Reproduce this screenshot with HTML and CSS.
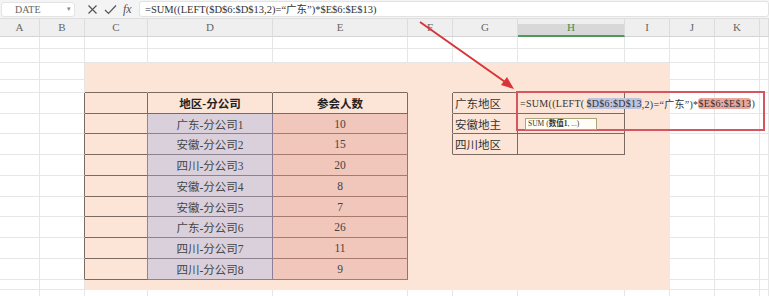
FILE: index.html
```html
<!DOCTYPE html>
<html lang="zh">
<head>
  <meta charset="UTF-8">
  <title>SUM</title>
  <link rel="stylesheet" href="styles.css">
</head>
<body>

<div class="app">
  <div class="fbar">
    <div class="namebox"><span>DATE</span><span class="drop">▾</span></div>
    <div class="tools">
      <svg width="11" height="11" viewBox="0 0 11 11"><path d="M1.5 1.5 L9.5 9.5 M9.5 1.5 L1.5 9.5" stroke="#555" stroke-width="1.2" fill="none"/></svg>
      <svg width="13" height="11" viewBox="0 0 13 11"><path d="M1 6 L4.5 9.5 L12 1.5" stroke="#555" stroke-width="1.2" fill="none"/></svg>
      <span class="fx">fx</span>
    </div>
    <div class="finput">=SUM((LEFT($D$6:$D$13,2)=“广东”)*$E$6:$E$13)</div>
  </div>

  <div class="sheet" id="sheet"></div>

  <div class="editbox"></div>
  <div class="tip">SUM (<b>数值1</b>, ...)</div>
  <svg class="arrow" width="769" height="296" viewBox="0 0 769 296">
    <line x1="420" y1="22" x2="508" y2="84" stroke="#d8343a" stroke-width="2"/>
    <polygon points="514,89 501,85 507,77" fill="#d8343a"/>
  </svg>
</div>

<script>
  // 列宽和行高 (像素)
  const cols = ['A', 'B', 'C', 'D', 'E', 'F', 'G', 'H', 'I', 'J', 'K', ''];
  const rowCount = 15;
  const sheet = document.getElementById('sheet');

  const names = ['广东-分公司1', '安徽-分公司2', '四川-分公司3', '安徽-分公司4',
                 '安徽-分公司5', '广东-分公司6', '四川-分公司7', '四川-分公司8'];
  const counts = [10, 15, 20, 8, 7, 26, 11, 9];
  const regions = ['广东地区', '安徽地主', '四川地区'];

  cols.forEach(function (c) {
    const d = document.createElement('div');
    d.className = 'hd' + (c === 'H' ? ' hd-on' : '');
    d.textContent = c;
    sheet.appendChild(d);
  });

  for (let r = 0; r < rowCount; r++) {
    for (let c = 0; c < cols.length; c++) {
      const cell = document.createElement('div');
      const cls = ['cell'];
      const inFill = r >= 2 && r <= 13 && c >= 2 && c <= 8;
      const inTable = r >= 4 && r <= 12 && c >= 2 && c <= 4;
      const inRight = r >= 4 && r <= 6 && (c === 6 || c === 7);
      if (inFill) cls.push('fill');
      if (inTable || inRight) cls.push('box');
      // 表格上边和左边的线
      if (r === 3 && ((c >= 2 && c <= 4) || c === 6 || c === 7)) cls.push('edge-b');
      if (c === 1 && r >= 4 && r <= 12) cls.push('edge-r');
      if (c === 5 && r >= 4 && r <= 6) cls.push('edge-r');

      if (r === 4 && c === 3) { cls.push('th'); cell.textContent = '地区-分公司'; }
      if (r === 4 && c === 4) { cls.push('th'); cell.textContent = '参会人数'; }
      if (r >= 5 && r <= 12) {
        if (c === 2) cls.push('ref-left');
        if (c === 3) { cls.push('ref-d'); cell.textContent = names[r - 5]; }
        if (c === 4) { cls.push('ref-e'); cell.textContent = counts[r - 5]; }
      }
      if (inRight && c === 6) { cls.push('label'); cell.textContent = regions[r - 4]; }
      if (r === 4 && c === 7) {
        cls.push('editing');
        cell.innerHTML = '=SUM((LEFT(<span class="pill-d">$D$6:$D$13</span>,2)=“广东”)*<span class="pill-e">$E$6:$E$13</span>)';
      }
      cell.className = cls.join(' ');
      sheet.appendChild(cell);
    }
  }
</script>

</body>
</html>
```

FILE: styles.css
```css
body {
  margin: 0;
  overflow: hidden;
  background: #fff;
  font-family: 'Liberation Serif', 'Noto Sans CJK SC', serif;
  color: #333;
}
.app {
  position: relative;
  width: 769px;
  height: 296px;
  overflow: hidden;
}

/* 编辑栏 */
.fbar {
  height: 19px;
  display: flex;
  align-items: center;
  background: #f4f4f4;
  border-bottom: 1px solid #dedede;
  box-sizing: border-box;
}
.namebox {
  width: 74px;
  height: 15px;
  margin-left: 1px;
  box-sizing: border-box;
  display: flex;
  align-items: center;
  justify-content: space-between;
  padding: 0 3px 0 13px;
  background: #fff;
  border: 1px solid #e4e4e4;
  border-radius: 3px;
  font-size: 10px;
  color: #666;
}
.namebox .drop {
  font-size: 7px;
  color: #888;
}
.tools {
  width: 64px;
  display: flex;
  align-items: center;
  gap: 6px;
  padding-left: 12px;
  box-sizing: border-box;
}
.fx {
  font-style: italic;
  font-size: 12px;
  color: #555;
}
.finput {
  flex: 1;
  height: 16px;
  line-height: 15px;
  box-sizing: border-box;
  background: #fff;
  border: 1px solid #e2e2e2;
  border-radius: 3px;
  padding-left: 5px;
  font-size: 10.5px;
  color: #333;
  white-space: nowrap;
}

/* 表格 */
.sheet {
  display: grid;
  grid-template-columns: 40px 45px 63px 125px 135px 45px 65px 107px 45px 45px 45px 9px;
  grid-template-rows: 18px 12px 14px 17px 13px 21px 20px 21px 21px 21px 20px 21px 21px 21px 10px 21px;
}
.hd {
  background: #efefef;
  border-right: 1px solid #dcdcdc;
  border-bottom: 1px solid #d4d4d4;
  box-sizing: border-box;
  font-size: 11px;
  color: #666;
  text-align: center;
  line-height: 17px;
}
.hd-on {
  background: linear-gradient(#efefef 0 5px, #d8d8d8 5px);
  border-bottom: 2px solid #4f9a5a;
  color: #3f8f4b;
}
.cell {
  border-right: 1px solid #e6e6e6;
  border-bottom: 1px solid #e6e6e6;
  box-sizing: border-box;
  font-size: 11.5px;
  display: flex;
  align-items: center;
  justify-content: center;
  white-space: nowrap;
}
.fill {
  background: #fce4d6;
  border-color: #fce4d6;
}
.box {
  border-color: #7b6a62;
}
.edge-b {
  border-bottom-color: #7b6a62;
}
.edge-r {
  border-right-color: #7b6a62;
}
.th {
  font-weight: bold;
  color: #222;
}
.ref-left {
  border-right-color: #7d86bd;
}
.ref-d {
  background: #dad0dc;
  border-right-color: #8b7f9a;
  border-bottom-color: #8e8290;
  color: #444;
}
.ref-e {
  background: #f1c6bb;
  border-right-color: #b0675c;
  border-bottom-color: #a87a6e;
  color: #444;
}
.label {
  justify-content: flex-start;
  padding-left: 2px;
}
.editing {
  position: relative;
  z-index: 1;
  justify-content: flex-start;
  padding-left: 2px;
  font-size: 10px;
  letter-spacing: 0.3px;
  overflow: visible;
}
.pill-d {
  background: #bfc3df;
  border-radius: 3px;
  margin-left: 2px;
}
.pill-e {
  background: #eba89e;
  border-radius: 3px;
}

/* 标注 */
.editbox {
  position: absolute;
  left: 516px;
  top: 91px;
  width: 249px;
  height: 40px;
  box-sizing: border-box;
  border: 2px solid #d65660;
  z-index: 2;
}
.tip {
  position: absolute;
  left: 525px;
  top: 118px;
  width: 72px;
  height: 12px;
  box-sizing: border-box;
  border: 1px solid #aaa57a;
  background: #fffef6;
  font-size: 7.5px;
  line-height: 10px;
  padding-left: 2px;
  white-space: nowrap;
  z-index: 3;
}
.arrow {
  position: absolute;
  left: 0;
  top: 0;
  z-index: 4;
  pointer-events: none;
}
```
